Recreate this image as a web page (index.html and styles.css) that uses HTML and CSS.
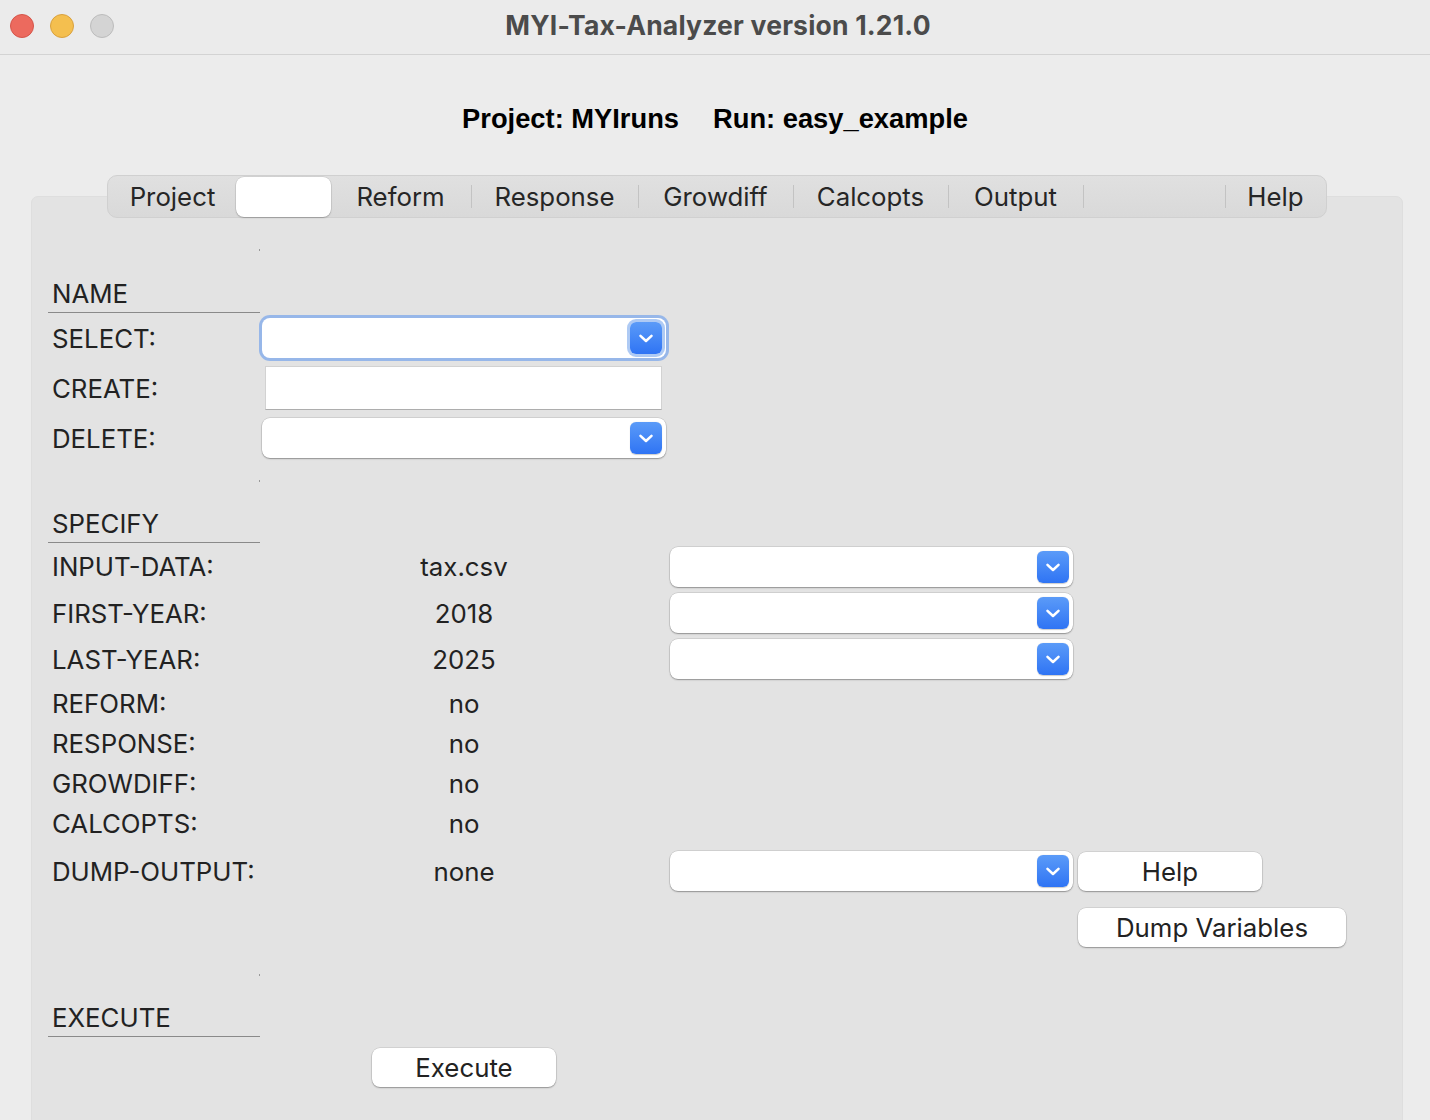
FILE: index.html
```html
<!DOCTYPE html>
<html>
<head>
<meta charset="utf-8">
<title>MYI-Tax-Analyzer</title>
<link rel="stylesheet" href="styles.css">
</head>
<body>
<div class="window">
  <div class="titlebar">
    <div class="lights">
      <span class="light red"></span>
      <span class="light yellow"></span>
      <span class="light gray"></span>
    </div>
    <div class="title">MYI-Tax-Analyzer version 1.21.0</div>
    <div></div>
  </div>

  <div class="header">
    <span class="hd-item">Project: MYIruns</span>
    <span class="hd-item">Run: easy_example</span>
  </div>

  <div class="tabwrap">
    <div class="tabs">
      <div class="tab">Project</div>
      <div class="tab selected"></div>
      <div class="tab">Reform</div>
      <div class="tab sep">Response</div>
      <div class="tab sep">Growdiff</div>
      <div class="tab sep">Calcopts</div>
      <div class="tab sep">Output</div>
      <div class="tab sep"></div>
      <div class="tab sep">Help</div>
    </div>
  </div>

  <div class="panel">
    <div class="spacer sp-name"><span class="tick"></span></div>
    <div class="section-label">NAME</div>
    <div class="row r50">
      <div class="label">SELECT:</div>
      <div class="cell2">
        <div class="select focused"><span class="drop"><svg viewBox="0 0 14 9" width="14" height="9"><path d="M1.5 1.8 L7 7 L12.5 1.8" fill="none" stroke="#fff" stroke-width="2.5" stroke-linecap="round" stroke-linejoin="round"/></svg></span></div>
      </div>
    </div>
    <div class="row r50">
      <div class="label">CREATE:</div>
      <div class="cell2"><div class="textfield"></div></div>
    </div>
    <div class="row r50">
      <div class="label">DELETE:</div>
      <div class="cell2">
        <div class="select"><span class="drop"><svg viewBox="0 0 14 9" width="14" height="9"><path d="M1.5 1.8 L7 7 L12.5 1.8" fill="none" stroke="#fff" stroke-width="2.5" stroke-linecap="round" stroke-linejoin="round"/></svg></span></div>
      </div>
    </div>

    <div class="spacer sp-spec"><span class="tick"></span></div>
    <div class="section-label">SPECIFY</div>
    <div class="row r47">
      <div class="label">INPUT-DATA:</div>
      <div class="value">tax.csv</div>
      <div class="cell3"><div class="select wide"><span class="drop"><svg viewBox="0 0 14 9" width="14" height="9"><path d="M1.5 1.8 L7 7 L12.5 1.8" fill="none" stroke="#fff" stroke-width="2.5" stroke-linecap="round" stroke-linejoin="round"/></svg></span></div></div>
    </div>
    <div class="row r46">
      <div class="label">FIRST-YEAR:</div>
      <div class="value">2018</div>
      <div class="cell3"><div class="select wide"><span class="drop"><svg viewBox="0 0 14 9" width="14" height="9"><path d="M1.5 1.8 L7 7 L12.5 1.8" fill="none" stroke="#fff" stroke-width="2.5" stroke-linecap="round" stroke-linejoin="round"/></svg></span></div></div>
    </div>
    <div class="row r46">
      <div class="label">LAST-YEAR:</div>
      <div class="value">2025</div>
      <div class="cell3"><div class="select wide"><span class="drop"><svg viewBox="0 0 14 9" width="14" height="9"><path d="M1.5 1.8 L7 7 L12.5 1.8" fill="none" stroke="#fff" stroke-width="2.5" stroke-linecap="round" stroke-linejoin="round"/></svg></span></div></div>
    </div>
    <div class="row r40 first40">
      <div class="label">REFORM:</div>
      <div class="value">no</div>
    </div>
    <div class="row r40">
      <div class="label">RESPONSE:</div>
      <div class="value">no</div>
    </div>
    <div class="row r40">
      <div class="label">GROWDIFF:</div>
      <div class="value">no</div>
    </div>
    <div class="row r40">
      <div class="label">CALCOPTS:</div>
      <div class="value">no</div>
    </div>
    <div class="row r56">
      <div class="label">DUMP-OUTPUT:</div>
      <div class="value">none</div>
      <div class="cell3"><div class="select wide"><span class="drop"><svg viewBox="0 0 14 9" width="14" height="9"><path d="M1.5 1.8 L7 7 L12.5 1.8" fill="none" stroke="#fff" stroke-width="2.5" stroke-linecap="round" stroke-linejoin="round"/></svg></span></div></div>
      <div class="cell4"><div class="button help-btn">Help</div></div>
    </div>
    <div class="row r56">
      <div></div><div></div><div></div>
      <div class="cell4"><div class="button dump-btn">Dump Variables</div></div>
    </div>

    <div class="spacer sp-exec"><span class="tick"></span></div>
    <div class="section-label">EXECUTE</div>
    <div class="row r60">
      <div></div>
      <div class="cell2 center"><div class="button exec-btn">Execute</div></div>
    </div>
  </div>
</div>
</body>
</html>
```

FILE: styles.css
```css
* { box-sizing: border-box; }

html, body {
  margin: 0;
  padding: 0;
}

body {
  width: 1430px;
  height: 1120px;
  overflow: hidden;
  background: #ececec;
  font-family: Inter, "Noto Sans", "Liberation Sans", sans-serif;
  color: #222222;
}

.window {
  width: 1430px;
  height: 1120px;
}

/* Title bar */
.titlebar {
  height: 55px;
  border-bottom: 1px solid #d3d3d3;
  display: grid;
  grid-template-columns: 1fr auto 1fr;
  align-items: center;
  background: #ebebeb;
}

.lights {
  display: flex;
  gap: 16px;
  padding-left: 10px;
  padding-bottom: 3px;
}

.light {
  width: 24px;
  height: 24px;
  border-radius: 50%;
  display: block;
}

.light.red { background: #ec6a5e; border: 1px solid #d5554a; }
.light.yellow { background: #f4bf4f; border: 1px solid #d9a13e; }
.light.gray { background: #d4d4d4; border: 1px solid #bcbcbc; }

.title {
  font-family: Inter, "Liberation Sans", sans-serif;
  font-weight: 700;
  font-size: 26.5px;
  letter-spacing: 0.2px;
  color: #4b4b4b;
  padding-bottom: 4px;
  padding-left: 6px;
}

/* Header */
.header {
  height: 120px;
  padding-top: 48px;
  display: flex;
  justify-content: center;
  gap: 34px;
  line-height: 32px;
  font-family: "Liberation Sans", Arial, sans-serif;
  font-weight: 700;
  font-size: 27.3px;
  color: #000;
}

/* Tabs */
.tabwrap {
  position: relative;
  z-index: 1;
  display: flex;
  justify-content: center;
  padding-left: 4px;
}

.tabs {
  display: grid;
  grid-template-columns: 129px 93px 141px 167px 155px 155px 135px 142px 101px;
  height: 43px;
  background: linear-gradient(#e0e0e0, #d9d9d9);
  border: 1px solid #d0d0d0;
  border-radius: 10px;
  align-items: center;
}

.tab {
  position: relative;
  height: 100%;
  display: flex;
  align-items: center;
  justify-content: center;
  font-size: 25.8px;
  color: #262626;
}

.tab.sep::before {
  content: "";
  position: absolute;
  left: 0;
  top: 9px;
  bottom: 9px;
  width: 1px;
  background: #c3c3c3;
}

.tab.selected {
  background: #ffffff;
  border-radius: 8px;
  height: 40px;
  margin: 0 -1px;
  box-shadow: 0 0 0 0.5px rgba(0, 0, 0, 0.12), 0 1px 1.5px rgba(0, 0, 0, 0.22);
}

/* Panel */
.panel {
  margin: -22px 27px 0 31px;
  height: 960px;
  background: #e3e3e3;
  border: 1px solid #dedede;
  border-radius: 7px;
  padding-left: 16px;
  font-size: 25.8px;
}

.spacer {
  position: relative;
}

.sp-name { height: 78px; }
.sp-spec { height: 42px; }
.sp-exec { height: 44px; }

.tick {
  position: absolute;
  left: 211px;
  width: 1px;
  height: 2px;
  background: #9a9a9a;
}

.sp-name .tick { top: 52px; }
.sp-spec .tick { top: 17px; }
.sp-exec .tick { top: 19px; }

.section-label {
  width: 212px;
  height: 38px;
  border-bottom: 1px solid #8a8a8a;
  padding-left: 4px;
  line-height: 38px;
  color: #222;
}

.row {
  display: grid;
  grid-template-columns: 212px 408px 406px 1fr;
  align-items: center;
}

.r50 { height: 50px; }
.r47 { height: 47px; }
.r46 { height: 46px; }
.r40 { height: 40px; }
.r56 { height: 56px; }
.r60 { height: 60px; }

.first40 { margin-top: 1px; }

.label {
  padding-left: 4px;
  color: #222;
  white-space: nowrap;
}

.value {
  text-align: center;
  color: #222;
}

.cell2 {
  padding: 0 2px;
}

.cell2.center {
  display: flex;
  justify-content: center;
}

.cell3 {
  padding-left: 2px;
}

.cell4 {
  padding-left: 4px;
}

/* Select (popup button) */
.select {
  position: relative;
  height: 40px;
  background: #ffffff;
  border-radius: 8px;
  box-shadow: 0 0 0 0.5px rgba(0, 0, 0, 0.16), 0 1px 1.5px rgba(0, 0, 0, 0.3);
  display: flex;
  align-items: center;
  justify-content: flex-end;
  padding-right: 4px;
}

.select.wide {
  width: 403px;
}

.select.focused {
  box-shadow: 0 0 0 3px rgba(126, 168, 235, 0.75);
}

.drop {
  width: 32px;
  height: 32px;
  border-radius: 6px;
  background: linear-gradient(#5b9bf8, #2f74f4);
  display: flex;
  align-items: center;
  justify-content: center;
  box-shadow: 0 0.5px 1px rgba(0, 0, 0, 0.2);
}

.drop svg {
  display: block;
  margin-top: 1px;
}

.select.focused .drop {
  box-shadow: 0 0 0 3px rgba(140, 180, 240, 0.7);
}

/* Text field */
.textfield {
  height: 44px;
  margin: 0 4px 0 3px;
  background: #ffffff;
  border: 1px solid #d2d2d2;
  border-bottom-color: #adadad;
}

/* Buttons */
.button {
  height: 39px;
  background: #ffffff;
  border-radius: 8px;
  box-shadow: 0 0 0 0.5px rgba(0, 0, 0, 0.14), 0 1px 1.5px rgba(0, 0, 0, 0.3);
  display: flex;
  align-items: center;
  justify-content: center;
  color: #222;
  font-size: 25.8px;
}

.help-btn { width: 184px; }
.dump-btn { width: 268px; }
.exec-btn { width: 184px; }
```
